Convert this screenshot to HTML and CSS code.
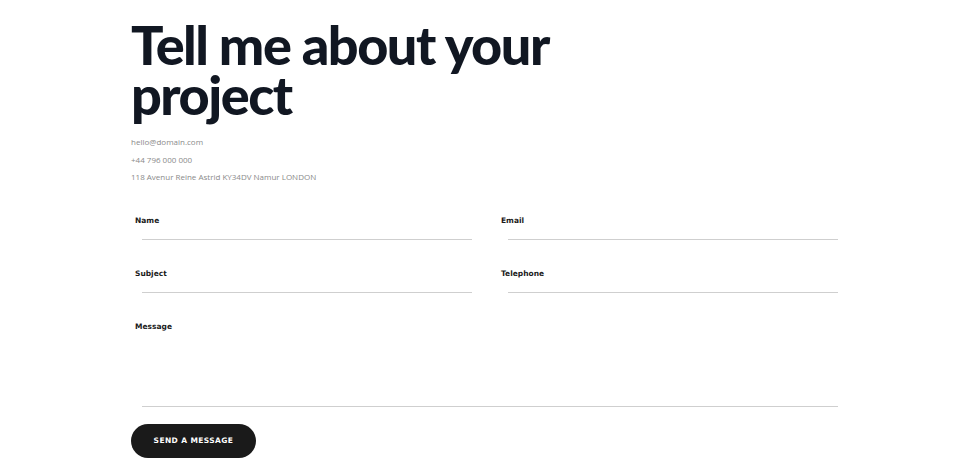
FILE: index.html
```html
<!DOCTYPE html>
<html lang="en">

<head>
  <meta charset="UTF-8">
  <meta name="viewport" content="width=device-width, initial-scale=1.0">
  <title>Contact</title>
  <link rel="stylesheet" href="styles.css">
</head>

<body>

  <div class="contact">
    <h1>Tell me about your<br>project</h1>

    <!-- Contact details -->
    <div class="details">
      <p>hello@domain.com</p>
      <p>+44 796 000 000</p>
      <p>118 Avenur Reine Astrid KY34DV Namur LONDON</p>
    </div>

    <!-- Form -->
    <form class="contact-form">
      <div class="field">
        <label for="name">Name</label>
        <input type="text" id="name">
      </div>
      <div class="field">
        <label for="email">Email</label>
        <input type="email" id="email">
      </div>
      <div class="field">
        <label for="subject">Subject</label>
        <input type="text" id="subject">
      </div>
      <div class="field">
        <label for="phone">Telephone</label>
        <input type="tel" id="phone">
      </div>
      <div class="field field-wide">
        <label for="message">Message</label>
        <textarea id="message"></textarea>
      </div>
    </form>

    <button class="send-button">SEND A MESSAGE</button>
  </div>

</body>

</html>
```

FILE: styles.css
```css
body {
  margin: 0;
  padding: 0;
  background: #fff;
  font-family: "DejaVu Sans", Arial, sans-serif;
}

.contact {
  width: 732px;
  margin-left: 131px;
  padding-top: 20px;
}

h1 {
  margin: 0;
  font-family: Lato, "DejaVu Sans", sans-serif;
  font-size: 54px;
  line-height: 50px;
  font-weight: 900;
  letter-spacing: -1.5px;
  color: #111722;
}

.details {
  margin-top: 13px;
}

.details p {
  margin: 0;
  font-family: "Open Sans", Arial, sans-serif;
  font-size: 8px;
  line-height: 17.5px;
  color: #8a8a8a;
}

.contact-form {
  display: grid;
  grid-template-columns: 366px 366px;
  margin-top: 24px;
}

.field {
  display: flex;
  flex-direction: column;
  height: 53px;
}

.field label {
  padding: 6px 0 0 4px;
  font-size: 7.5px;
  font-weight: bold;
  line-height: 10px;
  color: #1a1a1a;
}

.field input,
.field textarea {
  margin: 0 25px 0 11px;
  height: 13px;
  border: none;
  border-bottom: 1px solid #cfcfcf;
  outline: none;
  padding: 0;
  background: none;
}

.field-wide {
  grid-column: 1 / 3;
  height: auto;
}

.field textarea {
  height: 74px;
  resize: none;
}

.send-button {
  margin-top: 17px;
  width: 125px;
  height: 34px;
  border: none;
  border-radius: 17px;
  background: #1a1a1a;
  color: #fff;
  font-family: "DejaVu Sans", Arial, sans-serif;
  font-size: 7.5px;
  font-weight: bold;
  letter-spacing: 0.4px;
  cursor: pointer;
}
```
